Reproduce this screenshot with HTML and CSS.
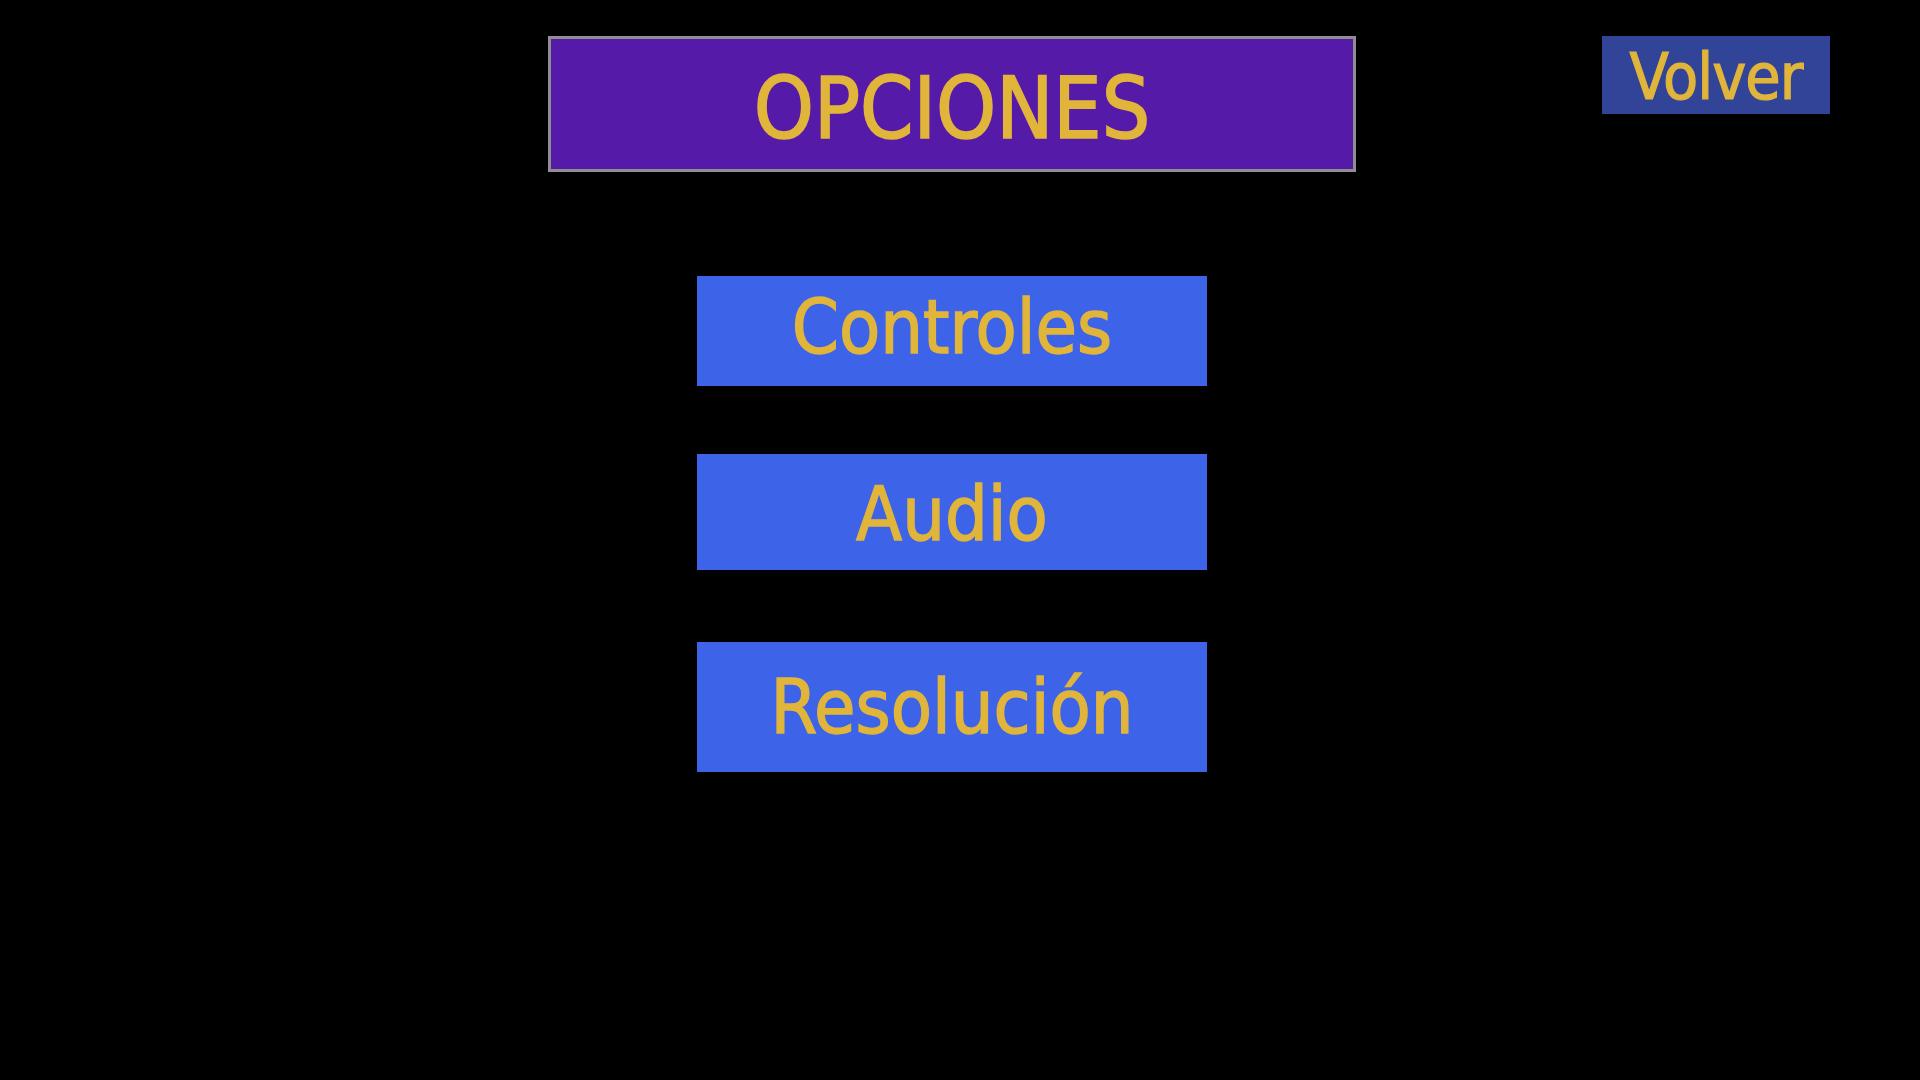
FILE: index.html
```html
<!DOCTYPE html>
<html lang="es">
<head>
<meta charset="utf-8">
<title>Opciones</title>
<link rel="stylesheet" href="styles.css">
</head>
<body>
<div class="page">
  <header class="top">
    <div class="spacer"></div>
    <h1 class="title">OPCIONES</h1>
    <div class="right"><button class="back">Volver</button></div>
  </header>
  <nav class="menu">
    <button class="item item-controles">Controles</button>
    <button class="item item-audio">Audio</button>
    <button class="item item-res">Resolución</button>
  </nav>
</div>
</body>
</html>
```
FILE: styles.css
```css
html, body {
  margin: 0;
  padding: 0;
  background: #000;
}
body {
  font-family: "DejaVu Sans Condensed", "DejaVu Sans", Verdana, sans-serif;
  font-stretch: condensed;
  color: #e0b53a;
}
.page {
  width: 1904px;
  height: 1080px;
  padding-top: 36px;
  box-sizing: border-box;
}
.top {
  display: grid;
  grid-template-columns: 1fr 808px 1fr;
  align-items: start;
}
.title {
  margin: 0;
  height: 136px;
  box-sizing: border-box;
  border: 3px solid #8f8f8f;
  background: #561aa8;
  display: flex;
  align-items: center;
  justify-content: center;
  font-size: 85px;
  font-weight: normal;
  padding-top: 8px;
  -webkit-text-stroke: 1.6px #e0b53a;
}
.right {
  display: flex;
  justify-content: flex-end;
  padding-right: 74px;
}
.back {
  width: 228px;
  height: 78px;
  border: 0;
  background: #324497;
  color: #e0b53a;
  font-family: inherit;
  font-stretch: condensed;
  font-size: 64px;
  padding: 3px 0 0;
  letter-spacing: -1px;
  -webkit-text-stroke: 1.2px #e0b53a;
  display: flex;
  align-items: center;
  justify-content: center;
}
.menu {
  margin-top: 104px;
  display: flex;
  flex-direction: column;
  align-items: center;
}
.item {
  width: 510px;
  border: 0;
  background: #3d63e8;
  color: #e0b53a;
  font-family: inherit;
  font-stretch: condensed;
  font-size: 75px;
  -webkit-text-stroke: 1.4px #e0b53a;
  display: flex;
  align-items: center;
  justify-content: center;
  padding: 0;
}
.item-controles { height: 110px; padding-bottom: 8px; }
.item-audio { height: 116px; margin-top: 68px; padding-top: 4px; }
.item-res { height: 130px; margin-top: 72px; }
```
